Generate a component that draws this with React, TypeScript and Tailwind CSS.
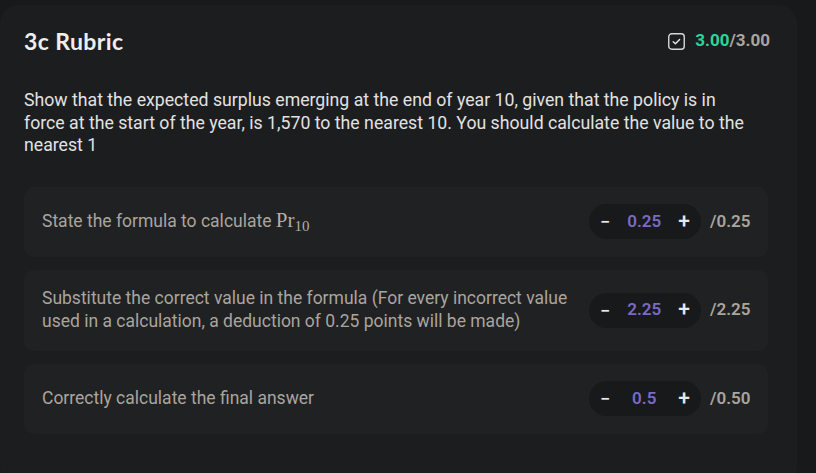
import React from "react";

type Item = { label: React.ReactNode; value: string; max: string };

const items: Item[] = [
  {
    label: (
      <>
        State the formula to calculate{" "}
        <span className="font-['Liberation_Serif',serif] text-[21px] text-[#b3aea7]">
          Pr<span className="relative top-[4px] text-[15px]">10</span>
        </span>
      </>
    ),
    value: "0.25",
    max: "/0.25",
  },
  {
    label:
      "Substitute the correct value in the formula (For every incorrect value used in a calculation, a deduction of 0.25 points will be made)",
    value: "2.25",
    max: "/2.25",
  },
  { label: "Correctly calculate the final answer", value: "0.5", max: "/0.50" },
];

function Stepper({ value }: { value: string }) {
  return (
    <div className="flex h-[35px] w-[112px] items-center justify-between rounded-full bg-[#18191a] px-[11px]">
      <span className="text-[18px] font-medium text-[#e8e8e8]">−</span>
      <span className="text-[17px] font-semibold text-[#7b6ac4]">{value}</span>
      <span className="text-[21px] font-medium text-[#e8e8e8]">+</span>
    </div>
  );
}

export default function App() {
  return (
    <div className="h-[473px] w-[816px] overflow-hidden bg-[#17191a] pt-[5px] font-['Roboto',sans-serif]">
      <div className="h-[480px] w-[797px] rounded-[18px] bg-[#1c1d1f] px-[24px] pt-[22px]">
        <div className="flex h-[28px] items-center justify-between pr-[3px]">
          <h1 className="font-['Lato',sans-serif] text-[23px] font-bold leading-[28px] tracking-[0.4px] text-[#eeeeee]">
            3c Rubric
          </h1>
          <div className="flex items-center gap-[10px]">
            <svg width="17" height="17" viewBox="0 0 17 17" fill="none">
              <rect x="0.75" y="0.75" width="15.5" height="15.5" rx="3" stroke="#d8d8d8" strokeWidth="1.4" />
              <path d="M5.2 8.7 L7.4 10.7 L11.6 6.4" stroke="#e8e8e8" strokeWidth="1.4" strokeLinecap="round" strokeLinejoin="round" />
            </svg>
            <span className="text-[17px] font-bold">
              <span className="text-[#2fd39c]">3.00</span>
              <span className="text-[#aaa59e]">/3.00</span>
            </span>
          </div>
        </div>
        <p className="mt-[34px] w-[725px] text-[17.7px] leading-[22.5px] text-[#e2e2e2]">
          Show that the expected surplus emerging at the end of year 10, given that the policy is in force at the start
          of the year, is 1,570 to the nearest 10. You should calculate the value to the nearest 1
        </p>
        <div className="mt-[30px] flex w-[744px] flex-col gap-[13px]">
          {items.map((it, i) => (
            <div
              key={i}
              className={`flex items-center justify-between rounded-[10px] bg-[#202123] pl-[18px] pr-[16px] ${
                i === 1 ? "h-[81px]" : "h-[70px]"
              }`}
            >
              <div className="max-w-[540px] text-[17.5px] leading-[23px] text-[#aaa59e]">{it.label}</div>
              <div className="flex items-center gap-[9px]">
                <Stepper value={it.value} />
                <span className="w-[42px] text-[17px] font-semibold text-[#aaa59e]">{it.max}</span>
              </div>
            </div>
          ))}
        </div>
      </div>
    </div>
  );
}
